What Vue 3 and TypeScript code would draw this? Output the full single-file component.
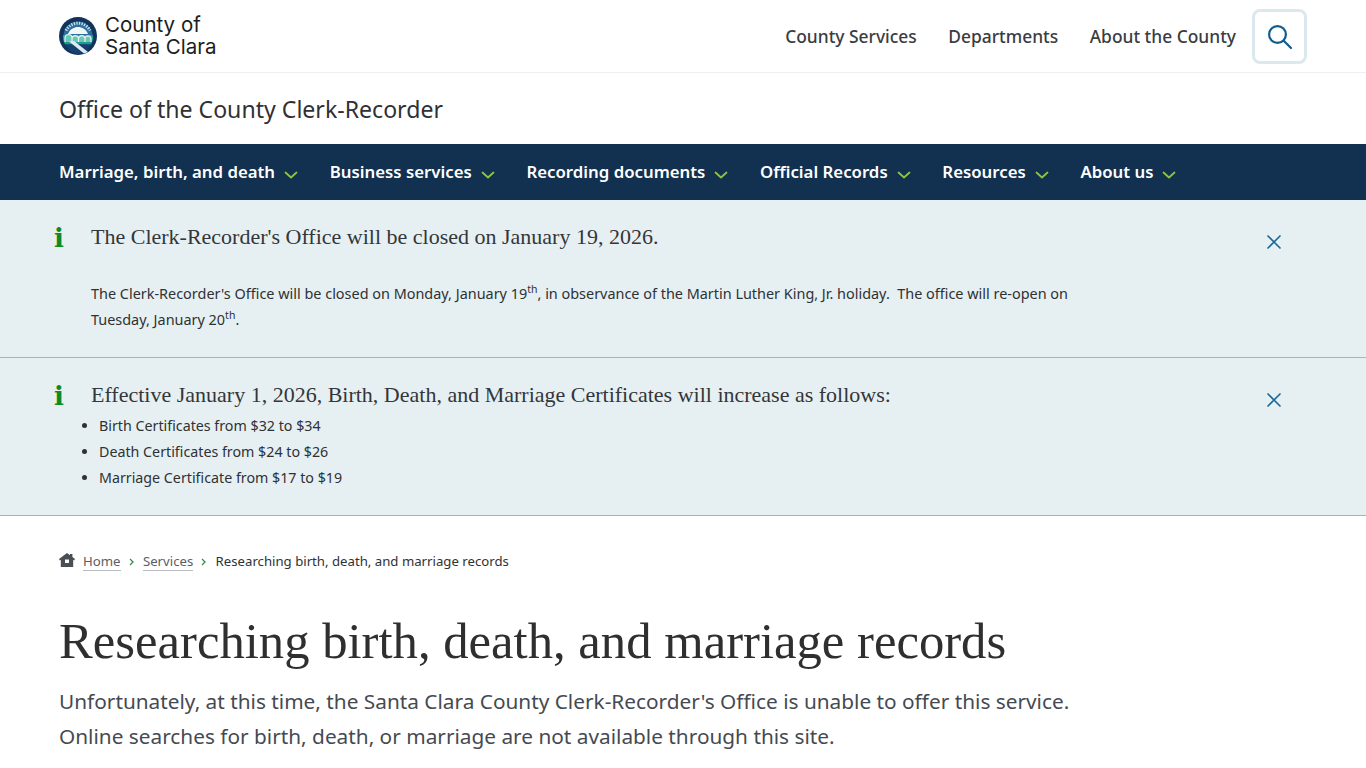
<script setup lang="ts">
const navItems: string[] = ['Marriage, birth, and death', 'Business services', 'Recording documents', 'Official Records', 'Resources', 'About us']
const topLinks: string[] = ['County Services', 'Departments', 'About the County']
const fees: string[] = ['Birth Certificates from $32 to $34', 'Death Certificates from $24 to $26', 'Marriage Certificate from $17 to $19']
</script>

<template>
  <div class="page">
    <header class="top">
      <div class="logo">
        <svg class="seal" width="38" height="38" viewBox="0 0 38 38" aria-hidden="true">
          <circle cx="19" cy="19" r="19" fill="#12345c" />
          <path d="M4.500 19a14.500 14.500 0 0 1 29 0z" fill="#2a6f9e" />
          <path d="M7 13.500a13.500 13.500 0 0 1 24 0" fill="none" stroke="#cfe0ea" stroke-width="3" stroke-dasharray="1.300 1.300" />
          <path d="M9 17c2-5 6-7 10-7s8 2 10 7z" fill="#f2f6f6" />
          <path d="M4 18h30c.5 4-.5 7-2 9.500H6c-1.500-2.500-2.500-5.500-2-9.500z" fill="#1f9a93" />
          <path d="M6 25v-4a3.400 3.400 0 0 1 7 0v4M13 25v-4a3.400 3.400 0 0 1 6.500 0v4M19.500 25v-4a3.400 3.400 0 0 1 6.500 0v4M26 25v-4a3.200 3.200 0 0 1 6 0v4" fill="#6cc7b6" stroke="#eaf6f3" stroke-width="1.200" />
          <path d="M6 27.500h26C29 33 24 37 19 37S9 33 6 27.500z" fill="#16406e" />
          <path d="M10 24.500l5-.5 14 11-4 1.500z" fill="#dfeaf1" />
        </svg>
        <div class="logo-text">County of<br />Santa Clara</div>
      </div>
      <nav class="top-links">
        <a v-for="link in topLinks" :key="link">{{ link }}</a>
        <button class="search" type="button" aria-label="Search">
          <svg width="26" height="26" viewBox="0 0 26 26" fill="none" stroke="#0f5c8f" stroke-width="2.200" stroke-linecap="round">
            <circle cx="10.500" cy="10.500" r="8.400" />
            <path d="M16.700 16.700l7.300 7.300" />
          </svg>
        </button>
      </nav>
    </header>

    <div class="site-title">Office of the County Clerk-Recorder</div>

    <nav class="main-nav">
      <a v-for="item in navItems" :key="item" class="nav-item">
        {{ item }}
        <svg width="14" height="8" viewBox="0 0 14 8" fill="none" stroke="#8cc63f" stroke-width="1.800" stroke-linecap="round" stroke-linejoin="round">
          <path d="M1.500 1.500L7 6.500l5.500-5" />
        </svg>
      </a>
    </nav>

    <section class="alert first">
      <span class="info">i</span>
      <div class="alert-body">
        <h2>The Clerk-Recorder's Office will be closed on January 19, 2026.</h2>
        <p>The Clerk-Recorder's Office will be closed on Monday, January 19<sup>th</sup>, in observance of the Martin Luther King, Jr. holiday.&nbsp; The office will re-open on Tuesday, January 20<sup>th</sup>.</p>
      </div>
      <svg class="close" width="16" height="16" viewBox="0 0 16 16" fill="none" stroke="#1c6a98" stroke-width="1.600">
        <path d="M1.500 1.500l13 13M14.500 1.500l-13 13" />
      </svg>
    </section>

    <section class="alert second">
      <span class="info">i</span>
      <div class="alert-body">
        <h2>Effective January 1, 2026, Birth, Death, and Marriage Certificates will increase as follows:</h2>
        <ul>
          <li v-for="fee in fees" :key="fee">{{ fee }}</li>
        </ul>
      </div>
      <svg class="close" width="16" height="16" viewBox="0 0 16 16" fill="none" stroke="#1c6a98" stroke-width="1.600">
        <path d="M1.500 1.500l13 13M14.500 1.500l-13 13" />
      </svg>
    </section>

    <div class="crumbs">
      <svg class="home" width="16" height="14" viewBox="0 0 16 14" aria-hidden="true">
        <path fill-rule="evenodd" d="M8 0l3 2.200V1h2.400v3L16 6l-.8 1.400-1-.6V14H1.800V6.800l-1 .6L0 6zM6 6.500v3.500h4V6.500z" fill="#4a4f55" />
      </svg>
      <a>Home</a>
      <svg class="sep" width="6" height="8" viewBox="0 0 6 8" fill="none" stroke="#3c8a4a" stroke-width="1.300"><path d="M1 1l3 3-3 3" /></svg>
      <a>Services</a>
      <svg class="sep" width="6" height="8" viewBox="0 0 6 8" fill="none" stroke="#3c8a4a" stroke-width="1.300"><path d="M1 1l3 3-3 3" /></svg>
      <span>Researching birth, death, and marriage records</span>
    </div>

    <main class="content">
      <h1>Researching birth, death, and marriage records</h1>
      <p>Unfortunately, at this time, the Santa Clara County Clerk-Recorder's Office is unable to offer this service.<br />Online searches for birth, death, or marriage are not available through this site.</p>
    </main>
  </div>
</template>

<style>
html, body { margin: 0; background: #fff; overflow: hidden; }
</style>

<style scoped>
.page { width: 1366px; height: 768px; overflow: hidden; font-family: "Noto Sans", sans-serif; color: #2f3133; }
.top { height: 72px; box-sizing: border-box; padding: 0 59px; display: flex; align-items: center; justify-content: space-between; }
.logo { display: flex; align-items: center; gap: 8px; }
.seal { display: block; }
.logo-text { font-family: Inter, sans-serif; font-size: 20.500px; line-height: 22px; color: #1c1d20; }
.top-links { display: flex; align-items: center; font-size: 17.400px; font-weight: 500; color: #3a3c3f; }
.top-links a { margin-right: 31.500px; }
.top-links a:nth-child(3) { margin-right: 16px; }
.search { width: 55px; height: 55px; margin-top: 1px; padding: 0; border: 3px solid #dbe8ee; border-radius: 8px; background: #fff; display: flex; align-items: center; justify-content: center; }
.site-title { height: 72px; box-sizing: border-box; padding-left: 59px; border-top: 1px solid #eef0f1; font-size: 23.100px; line-height: 72px; color: #2f3133; }
.main-nav { height: 56px; background: #12304f; padding-left: 59px; display: flex; align-items: center; gap: 31.700px; }
.nav-item { display: flex; align-items: center; gap: 9px; color: #fff; font-size: 16.800px; font-weight: 600; line-height: 54px; white-space: nowrap; }
.nav-item svg { margin-top: 6px; }
.alert { position: relative; background: #e6f0f3; box-sizing: border-box; padding-left: 91px; }
.first { height: 158px; border-bottom: 1px solid #a9b4b9; padding-top: 24px; }
.second { height: 158px; border-bottom: 1px solid #a5b8b0; padding-top: 24px; }
.info { position: absolute; left: 53px; top: 23px; width: 12px; text-align: center; font-family: "DejaVu Serif", serif; font-size: 26px; line-height: 30px; font-weight: 700; color: #0e8a1f; }
.alert-body { width: 990px; }
h2 { margin: 0; font-family: "Liberation Serif", serif; font-size: 22px; line-height: 26px; font-weight: 400; color: #33363a; white-space: nowrap; }
.alert p { margin: 31px 0 0; font-size: 14.430px; line-height: 26px; color: #2f3133; }
sup { font-size: 10.500px; line-height: 0; }
ul { margin: 5px 0 0; padding-left: 8px; font-size: 14.250px; line-height: 26px; color: #2f3133; }
.close { position: absolute; left: 1266px; top: 34px; }
.crumbs { height: 93px; box-sizing: border-box; padding: 36px 0 0 59px; display: flex; align-items: flex-start; font-size: 13.200px; line-height: 18px; color: #2f3133; }
.crumbs svg { margin-top: 1px; }
.crumbs .home { margin-right: 8px; }
.crumbs a { color: #5a5e63; border-bottom: 1px solid #b9bdc1; line-height: 18px; height: 18px; }
.crumbs .sep { margin: 6px 8.200px 0; }
.content { padding-left: 59px; }
h1 { margin: 0; font-family: "Liberation Serif", serif; font-weight: 400; font-size: 50.700px; line-height: 64px; color: #2f2f2f; white-space: nowrap; }
.content p { margin: 11px 0 0; font-size: 20.800px; line-height: 35px; color: #454a52; white-space: nowrap; }
</style>
